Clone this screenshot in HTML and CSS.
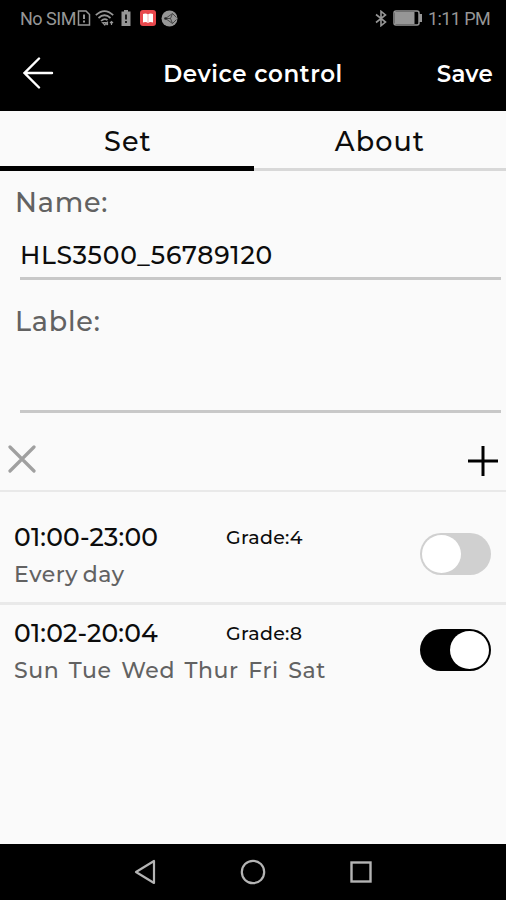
FILE: index.html
```html
<!DOCTYPE html>
<html lang="en">
<head>
  <meta charset="UTF-8" />
  <meta name="viewport" content="width=device-width, initial-scale=1.0" />
  <title>Device control</title>
  <link rel="stylesheet" href="styles.css">
</head>
<body>
  <div class="status-bar">
    <div class="status-left">
      <span class="carrier">No SIM</span>
      <svg class="ic-sim" width="14" height="16" viewBox="0 0 14 16" fill="none" stroke="#969696" stroke-width="1.5">
        <path d="M1.5 1h7.5l3.5 3.5V15h-11z"/>
        <path d="M7 4.5v4.5M7 10.5v2" stroke-width="2"/>
      </svg>
      <svg class="ic-wifi" width="19" height="16" viewBox="0 0 19 16" fill="none" stroke="#969696" stroke-width="1.7">
        <path d="M.8 5.2Q9.500-3 18.200 5.200M3.500 8Q9.500 2.500 15.500 8M6 11q3.500-3.300 6.500-.8"/>
        <path d="M7.500 12.700 9.800 15l1.500-2.500zM12.500 11.500v3.500M11 13.500l1.500 1.500M16.500 15v-3.500M15 13l1.500-1.500 1.500 1.500" stroke-width="1.200"/>
      </svg>
      <svg class="ic-cell" width="10" height="16" viewBox="0 0 10 16">
        <path d="M3 0h4v1.500h2.500v14.500h-9V1.500H3z" fill="#969696"/>
        <path d="M5 4.500v5M5 11v2" stroke="#000" stroke-width="1.600"/>
      </svg>
      <svg class="ic-book" width="16" height="16" viewBox="0 0 16 16">
        <rect width="16" height="16" rx="3" fill="#e8474c"/>
        <path d="M3 4q3-1 5 .5Q10 3 13 4v8.500q-3-1-5 .5-2-1.500-5-.5z" fill="#fff"/>
        <path d="M8 4.500V13" stroke="#f3b0b2" stroke-width="1"/>
      </svg>
      <svg class="ic-share" width="17" height="17" viewBox="0 0 17 17">
        <circle cx="8.500" cy="8.500" r="8" fill="#969696"/>
        <path d="M11.500 3.500 4.500 8.500l7 5M11.500 3.500 9.500 8.500l2 5M4.500 8.500h5M11.500 3.500l4 4M11.500 13.500l4-4" fill="none" stroke="#444" stroke-width="1"/>
        <circle cx="4.500" cy="8.500" r="1.300" fill="#222"/>
      </svg>
    </div>
    <div class="status-right">
      <svg width="12" height="17" viewBox="0 0 12 17" fill="none" stroke="#969696" stroke-width="1.600">
        <path d="M1 4.500l9.500 7.500L6 15.700V1.300L10.500 5 1 12.500"/>
      </svg>
      <svg class="ic-battery" width="30" height="16" viewBox="0 0 30 16">
        <rect x="1" y="1" width="25" height="14" rx="2" fill="none" stroke="#969696" stroke-width="1.500"/>
        <rect x="2" y="2" width="19.500" height="12" fill="#969696"/>
        <path d="M26 4h3v8h-3z" fill="#969696"/>
      </svg>
      <span class="clock">1:11 PM</span>
    </div>
  </div>

  <header class="header">
    <button class="back" aria-label="Back">
      <svg width="31" height="32" viewBox="0 0 31 32" fill="none" stroke="#fff" stroke-width="2.400" stroke-linecap="round">
        <path d="M29 16H1.500M16 1.500 1.500 16 16 30.500"/>
      </svg>
    </button>
    <h1>Device control</h1>
    <button class="save">Save</button>
  </header>

  <nav class="tabs">
    <a class="tab active">Set</a>
    <a class="tab">About</a>
  </nav>

  <main class="content">
    <div class="field">
      <label>Name:</label>
      <div class="field-value">HLS3500_56789120</div>
    </div>
    <div class="field field-lable">
      <label>Lable:</label>
      <div class="field-value"></div>
    </div>

    <div class="toolbar">
      <svg class="ic-delete" width="28" height="28" viewBox="0 0 28 28" stroke="#a0a0a0" stroke-width="3.200" stroke-linecap="round">
        <path d="M2 2l24 24M26 2 2 26"/>
      </svg>
      <svg class="ic-plus" width="30" height="30" viewBox="0 0 30 30" stroke="#000" stroke-width="3">
        <path d="M15 0v30M0 15h30"/>
      </svg>
    </div>

    <div class="timer first">
      <div class="timer-info">
        <div class="timer-top">
          <span class="time">01:00-23:00</span>
          <span class="grade">Grade:4</span>
        </div>
        <div class="days every">Every day</div>
      </div>
      <div class="switch"><span class="knob"></span></div>
    </div>
    <div class="timer">
      <div class="timer-info">
        <div class="timer-top">
          <span class="time">01:02-20:04</span>
          <span class="grade">Grade:8</span>
        </div>
        <div class="days">Sun Tue Wed Thur Fri Sat</div>
      </div>
      <div class="switch on"><span class="knob"></span></div>
    </div>
  </main>

  <footer class="nav-bar">
    <svg width="22" height="26" viewBox="0 0 22 26" fill="none" stroke="#b4b4b4" stroke-width="2.200" stroke-linejoin="round">
      <path d="M20 2v22L2 13z"/>
    </svg>
    <svg width="26" height="26" viewBox="0 0 26 26" fill="none" stroke="#b4b4b4" stroke-width="2.200">
      <circle cx="13" cy="13" r="11.200"/>
    </svg>
    <svg width="22" height="22" viewBox="0 0 22 22" fill="none" stroke="#b4b4b4" stroke-width="2.400">
      <rect x="1.500" y="1.500" width="19" height="19"/>
    </svg>
  </footer>
</body>
</html>
```

FILE: styles.css
```css
:root {
  --bg-color: #fafafa;
  --text-color: #0c0c0c;
  --muted: #626262;
  --line: #c8c8c8;
  --divider: #e9e9e9;
  --status: #969696;
}

* {
  box-sizing: border-box;
  margin: 0;
  padding: 0;
}

body {
  font-family: Montserrat, Inter, sans-serif;
  font-weight: 500;
  height: 900px;
  background: var(--bg-color);
  color: var(--text-color);
  display: flex;
  flex-direction: column;
  overflow: hidden;
}

svg {
  display: block;
  flex: none;
}

button {
  background: none;
  border: none;
  color: inherit;
  font-family: inherit;
}

.status-bar {
  height: 36px;
  background: #000;
  color: var(--status);
  font-family: Roboto, sans-serif;
  font-weight: 400;
  font-size: 18px;
  display: flex;
  justify-content: space-between;
  padding: 0 16px 0 20px;
}

.status-left,
.status-right {
  display: flex;
  align-items: center;
}

.carrier {
  width: 57px;
  letter-spacing: -0.5px;
  white-space: nowrap;
}

.ic-wifi { margin-left: 4px; }
.ic-cell { margin-left: 7px; }
.ic-book { margin-left: 9px; }
.ic-share { margin-left: 5px; }
.ic-battery { margin: 0 5px 0 6px; }

.clock {
  width: 62px;
  letter-spacing: -0.6px;
  white-space: nowrap;
}

.header {
  height: 75px;
  background: #000;
  color: #fff;
  display: grid;
  grid-template-columns: 100px 1fr 110px;
  align-items: center;
  padding: 0 13px 0 23px;
}

.back {
  width: 31px;
  padding-bottom: 2px;
}

.header h1 {
  font-size: 23px;
  font-weight: 600;
  letter-spacing: 0.6px;
  text-align: center;
  white-space: nowrap;
}

.save {
  font-size: 23px;
  font-weight: 600;
  letter-spacing: 0.2px;
  text-align: right;
}

.tabs {
  height: 60px;
  display: flex;
}

.tab {
  flex: 1;
  font-size: 27px;
  letter-spacing: 1.1px;
  line-height: 62px;
  text-align: center;
  box-shadow: inset 0 -3px #d8d8d8;
}

.tab.active {
  padding-left: 2px;
  box-shadow: inset 0 -5px #000;
}

.content {
  flex: 1;
}

.field {
  height: 109px;
  padding: 16px 5px 0 15px;
}

.field label {
  display: block;
  font-size: 27px;
  line-height: 32px;
  letter-spacing: 0.8px;
  color: var(--muted);
}

.field-value {
  height: 61px;
  margin-left: 5px;
  border-bottom: 3px solid var(--line);
  font-size: 25px;
  line-height: 72px;
  letter-spacing: 0.8px;
}

.field-lable {
  height: 133px;
  padding-top: 26px;
}

.field-lable .field-value {
  height: 75px;
}

.toolbar {
  height: 79px;
  border-bottom: 2px solid var(--divider);
  display: flex;
  justify-content: space-between;
  align-items: flex-end;
  padding: 0 8px 14px;
}

.ic-delete {
  margin-bottom: 3px;
}

.timer {
  height: 96px;
  display: flex;
  justify-content: space-between;
  padding: 0 15px 0 14px;
}

.timer.first {
  height: 113px;
  padding-top: 17px;
  border-bottom: 3px solid var(--divider);
}

.timer-info {
  padding-top: 12px;
}

.timer-top {
  display: flex;
  align-items: center;
  height: 32px;
}

.time {
  width: 212px;
  font-size: 25px;
  letter-spacing: 0.2px;
}

.grade {
  font-size: 19px;
  letter-spacing: 0.3px;
}

.days {
  font-size: 22px;
  line-height: 26px;
  margin-top: 9px;
  letter-spacing: 0.6px;
  word-spacing: 3px;
  color: var(--muted);
  white-space: nowrap;
}

.days.every {
  word-spacing: -2px;
}

.switch {
  width: 71px;
  height: 42px;
  margin-top: 24px;
  padding: 2px;
  border-radius: 21px;
  background: #d0d0d0;
  display: flex;
}

.switch.on {
  background: #000;
  justify-content: flex-end;
}

.knob {
  width: 39px;
  height: 38px;
  border-radius: 50%;
  background: #fff;
}

.nav-bar {
  height: 56px;
  background: #000;
  display: flex;
  justify-content: space-between;
  align-items: center;
  padding: 0 134px;
}
```
